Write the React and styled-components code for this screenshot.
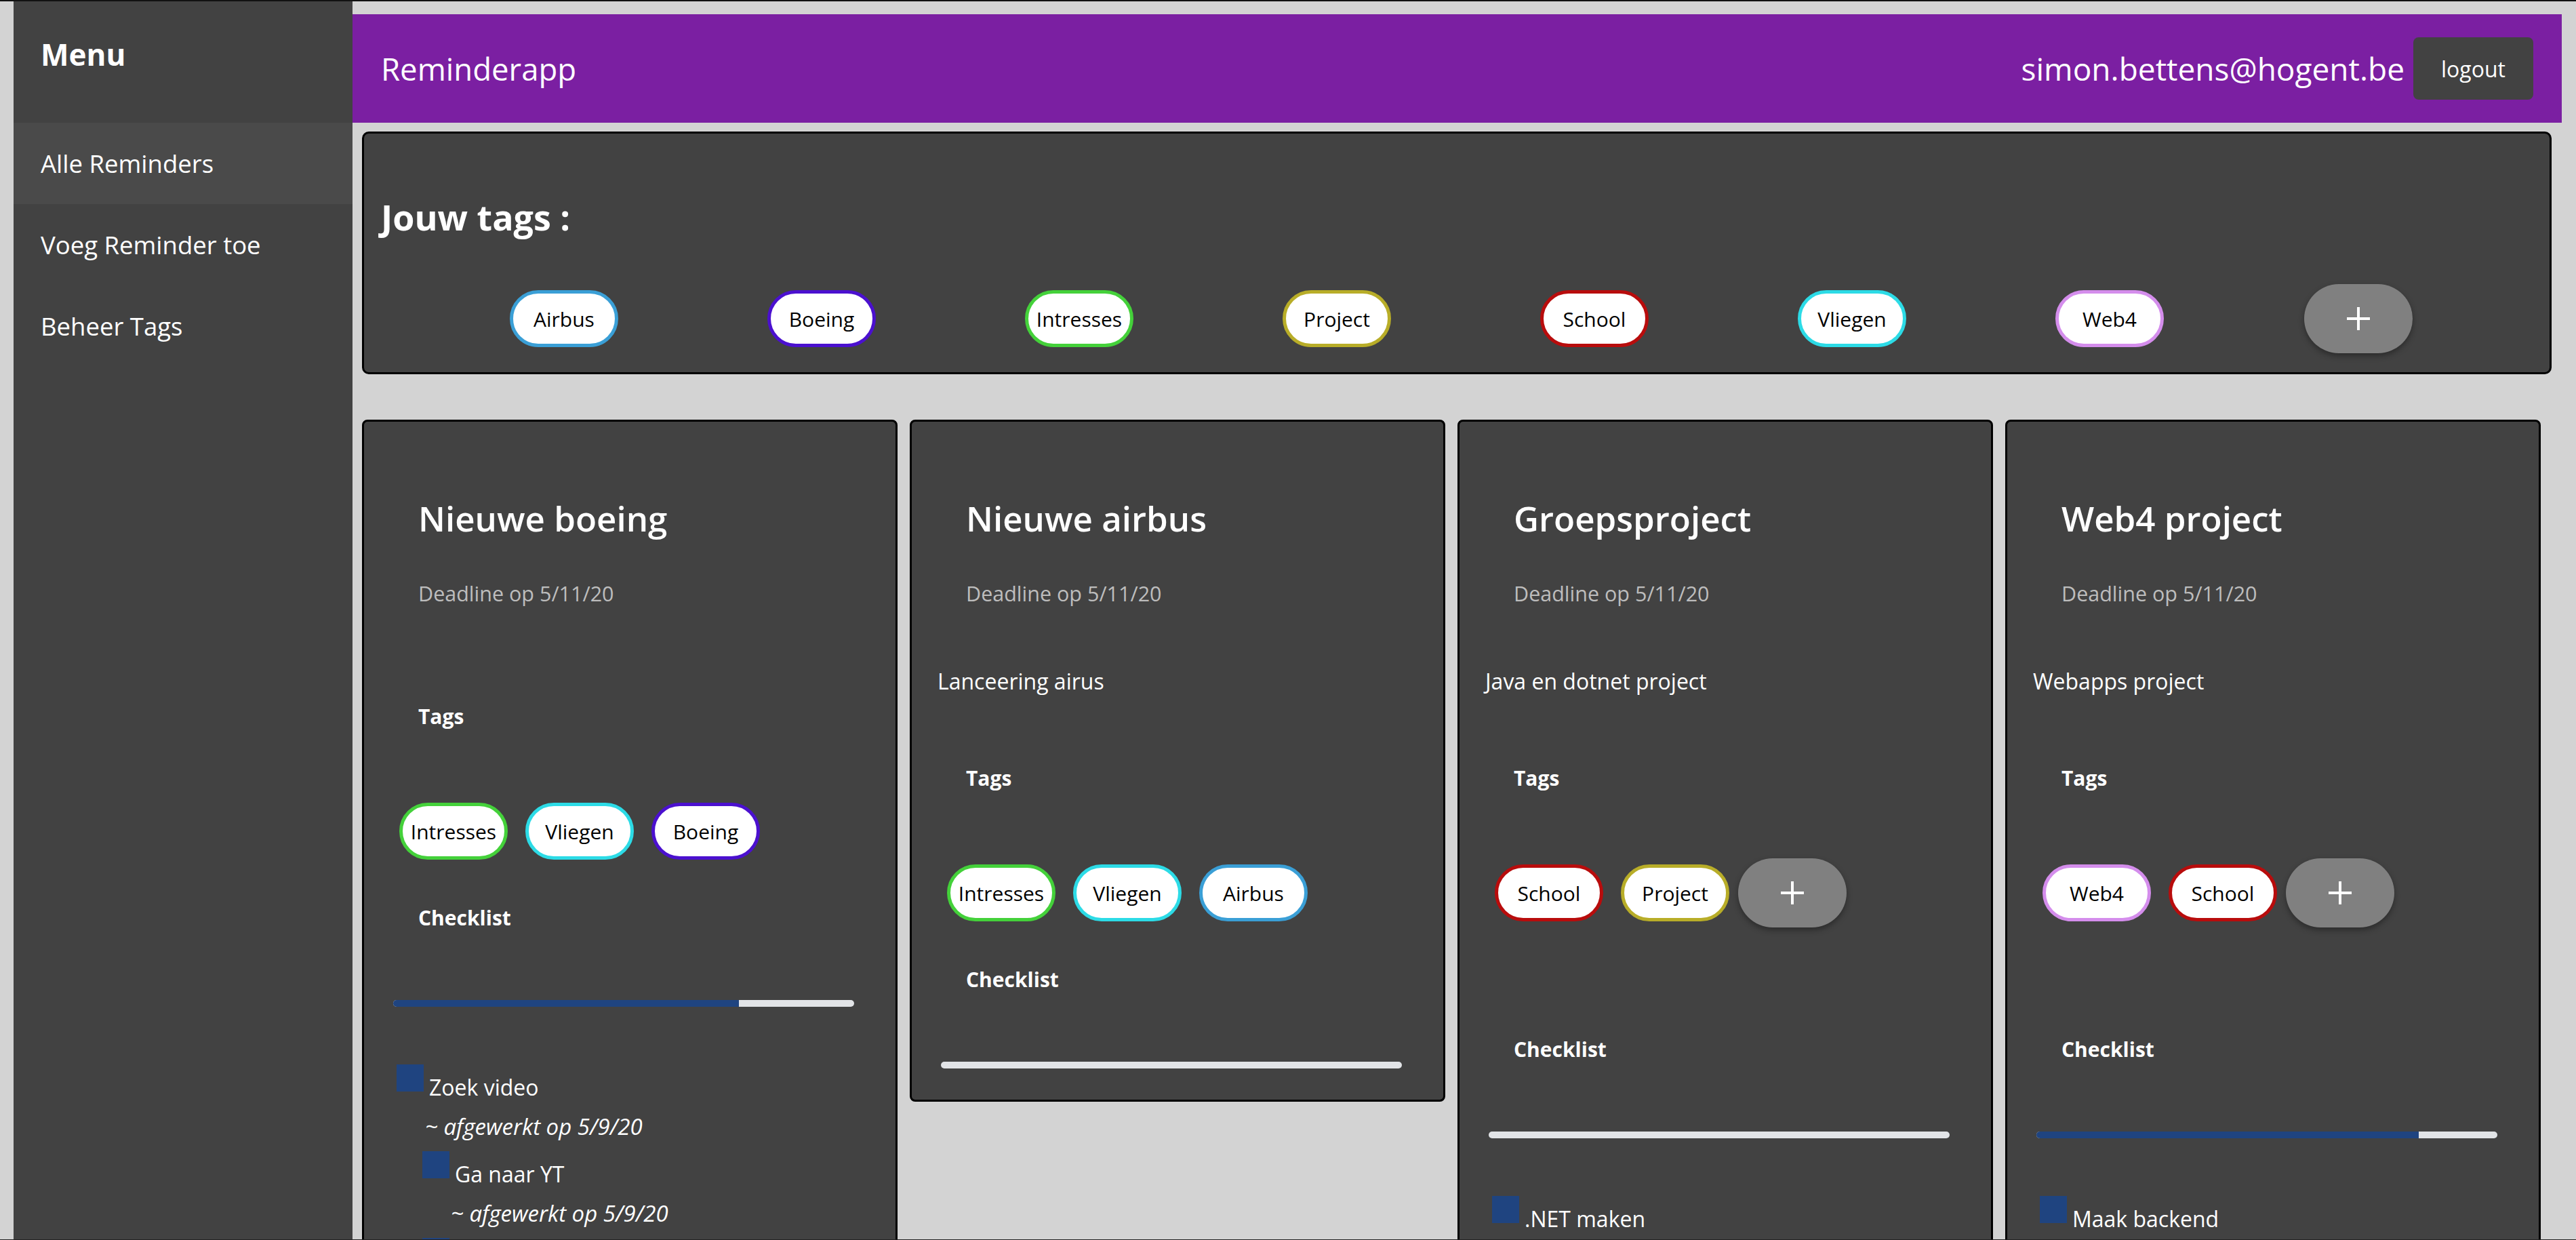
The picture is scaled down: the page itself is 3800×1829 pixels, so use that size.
import React from "react";
import styled, { createGlobalStyle } from "styled-components";

const GlobalStyle = createGlobalStyle`
  html, body {
    margin: 0;
    padding: 0;
  }
  body {
    font-family: "Open Sans", "Noto Sans", sans-serif;
    background: #d3d3d3;
  }
  * {
    box-sizing: border-box;
  }
`;

const TAGS = {
  Airbus: "#3a9fd6",
  Boeing: "#4b10cf",
  Intresses: "#44d13a",
  Project: "#b8ad28",
  School: "#b80c0c",
  Vliegen: "#2cdbe6",
  Web4: "#d48dec",
};

const REMINDERS = [
  {
    title: "Nieuwe boeing",
    deadline: "5/11/20",
    tags: ["Intresses", "Vliegen", "Boeing"],
    progress: 75,
    items: [
      {
        text: "Zoek video",
        done: "5/9/20",
        children: [
          { text: "Ga naar YT", done: "5/9/20" },
          { text: "Bekijk video", done: "5/9/20" },
        ],
      },
    ],
  },
  {
    title: "Nieuwe airbus",
    deadline: "5/11/20",
    description: "Lanceering airus",
    tags: ["Intresses", "Vliegen", "Airbus"],
    progress: 0,
    items: [],
  },
  {
    title: "Groepsproject",
    deadline: "5/11/20",
    description: "Java en dotnet project",
    tags: ["School", "Project"],
    canAddTag: true,
    progress: 0,
    items: [{ text: ".NET maken" }],
  },
  {
    title: "Web4 project",
    deadline: "5/11/20",
    description: "Webapps project",
    tags: ["Web4", "School"],
    canAddTag: true,
    progress: 83,
    items: [{ text: "Maak backend" }],
  },
];

const Shell = styled.div`
  display: flex;
  height: 100vh;
  overflow: hidden;
  border-top: 2px solid #111;
  border-bottom: 1px solid #222;
  background: #d3d3d3;
`;

const Gutter = styled.div`
  width: 20px;
  flex-shrink: 0;
`;

const Sidebar = styled.nav`
  width: 500px;
  flex-shrink: 0;
  background: #424242;
  color: #fff;
`;

const SidebarTitle = styled.h1`
  margin: 0;
  height: 179px;
  padding: 48px 0 0 40px;
  font-size: 44px;
  line-height: 60px;
  font-weight: 700;
`;

const NavItem = styled.div`
  height: 120px;
  display: flex;
  align-items: center;
  padding-left: 40px;
  font-size: 36.5px;
  background: ${(p) => (p.$active ? "#4a4a4a" : "transparent")};
`;

const Main = styled.main`
  flex: 1;
  min-width: 0;
  display: flex;
  flex-direction: column;
  padding-right: 21px;
`;

const TopBar = styled.header`
  margin-top: 19px;
  height: 160px;
  flex-shrink: 0;
  display: flex;
  align-items: center;
  padding: 0 42px;
  background: #7b1fa2;
  color: #fff;
`;

const Brand = styled.div`
  flex: 1;
  font-size: 45.5px;
`;

const UserMail = styled.span`
  font-size: 46px;
`;

const LogoutButton = styled.button`
  width: 177px;
  height: 92px;
  margin-left: 13px;
  border: none;
  border-radius: 8px;
  background: #424242;
  color: #fff;
  font-family: inherit;
  font-size: 32px;
`;

const TagPanel = styled.section`
  margin: 13px 15px 0 14px;
  height: 358px;
  flex-shrink: 0;
  padding: 93px 8px 0;
  border: 3px solid #000;
  border-radius: 10px;
  background: #424242;
  color: #fff;
`;

const PanelTitle = styled.h2`
  margin: 0;
  padding-left: 17px;
  font-size: 52px;
  line-height: 60px;
  font-weight: 700;
`;

const TagStrip = styled.div`
  margin-top: 69px;
  height: 102px;
  display: flex;
  align-items: center;
  justify-content: space-evenly;
`;

const Chip = styled.span`
  width: 160px;
  height: 84px;
  flex-shrink: 0;
  margin: 0 13px;
  display: inline-flex;
  align-items: center;
  justify-content: center;
  border: 5px solid ${(p) => p.$color};
  border-radius: 42px;
  background: #fff;
  color: #000;
  font-size: 30px;
  font-weight: 500;
`;

const AddButton = styled.button`
  width: 160px;
  height: 102px;
  flex-shrink: 0;
  margin: ${(p) => (p.$inRow ? "-9px 0" : "0")};
  display: flex;
  align-items: center;
  justify-content: center;
  border: none;
  border-radius: 51px;
  background: #808080;
  box-shadow: 0 4px 8px rgba(0, 0, 0, 0.35);
`;

const CardGrid = styled.div`
  display: grid;
  grid-template-columns: repeat(4, 790px);
  gap: 18px;
  align-items: start;
  margin: 67px 0 0 14px;
`;

const Card = styled.article`
  display: flex;
  flex-direction: column;
  padding-bottom: 46px;
  border: 3px solid #000;
  border-radius: 8px;
  background: #424242;
  color: #fff;
`;

const CardTitle = styled.h3`
  margin: 112px 0 0;
  padding-left: 80px;
  font-size: 51px;
  line-height: 60px;
  font-weight: 600;
`;

const Deadline = styled.div`
  margin-top: 61px;
  padding-left: 80px;
  font-size: 30.5px;
  line-height: 40px;
  color: #bdbdbd;
`;

const Description = styled.p`
  margin: 90px 0 0;
  padding-left: 38px;
  font-size: 32px;
  line-height: 40px;
`;

const SectionLabel = styled.div`
  margin-top: ${(p) => p.$gap}px;
  padding-left: 80px;
  font-size: 30px;
  line-height: 40px;
  font-weight: 700;
`;

const ChipRow = styled.div`
  margin-top: 107px;
  padding-left: 39px;
  height: 84px;
  display: flex;
  align-items: center;
`;

const Track = styled.div`
  margin: 101px 61px 0 43px;
  height: 10px;
  border-radius: 5px;
  overflow: hidden;
  background: #e2e4e7;
`;

const Fill = styled.div`
  height: 100%;
  background: #1f4480;
`;

const Checklist = styled.div`
  margin-top: 85px;
  padding-left: 48px;
`;

const ItemLine = styled.div`
  font-size: 32px;
  line-height: 40px;
`;

const Box = styled.span`
  display: inline-block;
  width: 40px;
  height: 40px;
  margin-right: 8px;
  vertical-align: 6px;
  background: #1f4480;
`;

const DoneLine = styled.div`
  margin: 18px 0 16px;
  padding-left: 42px;
  font-size: 33px;
  line-height: 40px;
  font-style: italic;
`;

const NestedList = styled.div`
  padding-left: 38px;
`;

function PlusIcon() {
  return (
    <svg width="36" height="36" viewBox="0 0 36 36">
      <path d="M18 1v34M1 18h34" stroke="#fff" strokeWidth="4" />
    </svg>
  );
}

function CheckItem({ item }) {
  return (
    <div>
      <ItemLine>
        <Box />
        {item.text}
      </ItemLine>
      {item.done && <DoneLine>~ afgewerkt op {item.done}</DoneLine>}
      {item.children && (
        <NestedList>
          {item.children.map((c) => (
            <CheckItem key={c.text} item={c} />
          ))}
        </NestedList>
      )}
    </div>
  );
}

function ReminderCard({ reminder }) {
  const { title, deadline, description, tags, canAddTag, progress, items } =
    reminder;
  return (
    <Card>
      <CardTitle>{title}</CardTitle>
      <Deadline>Deadline op {deadline}</Deadline>
      {description && <Description>{description}</Description>}
      <SectionLabel $gap={description ? 103 : 142}>Tags</SectionLabel>
      <ChipRow>
        {tags.map((t) => (
          <Chip key={t} $color={TAGS[t]}>
            {t}
          </Chip>
        ))}
        {canAddTag && (
          <AddButton $inRow>
            <PlusIcon />
          </AddButton>
        )}
      </ChipRow>
      <SectionLabel $gap={canAddTag ? 169 : 66}>Checklist</SectionLabel>
      <Track>
        <Fill style={{ width: `${progress}%` }} />
      </Track>
      {items.length > 0 && (
        <Checklist>
          {items.map((it) => (
            <CheckItem key={it.text} item={it} />
          ))}
        </Checklist>
      )}
    </Card>
  );
}

export default function App() {
  return (
    <>
      <GlobalStyle />
      <Shell>
        <Gutter />
        <Sidebar>
          <SidebarTitle>Menu</SidebarTitle>
          <NavItem $active>Alle Reminders</NavItem>
          <NavItem>Voeg Reminder toe</NavItem>
          <NavItem>Beheer Tags</NavItem>
        </Sidebar>
        <Main>
          <TopBar>
            <Brand>Reminderapp</Brand>
            <UserMail>simon.bettens@hogent.be</UserMail>
            <LogoutButton>logout</LogoutButton>
          </TopBar>
          <TagPanel>
            <PanelTitle>Jouw tags :</PanelTitle>
            <TagStrip>
              {Object.entries(TAGS).map(([name, color]) => (
                <Chip key={name} $color={color}>
                  {name}
                </Chip>
              ))}
              <AddButton>
                <PlusIcon />
              </AddButton>
            </TagStrip>
          </TagPanel>
          <CardGrid>
            {REMINDERS.map((r) => (
              <ReminderCard key={r.title} reminder={r} />
            ))}
          </CardGrid>
        </Main>
      </Shell>
    </>
  );
}
